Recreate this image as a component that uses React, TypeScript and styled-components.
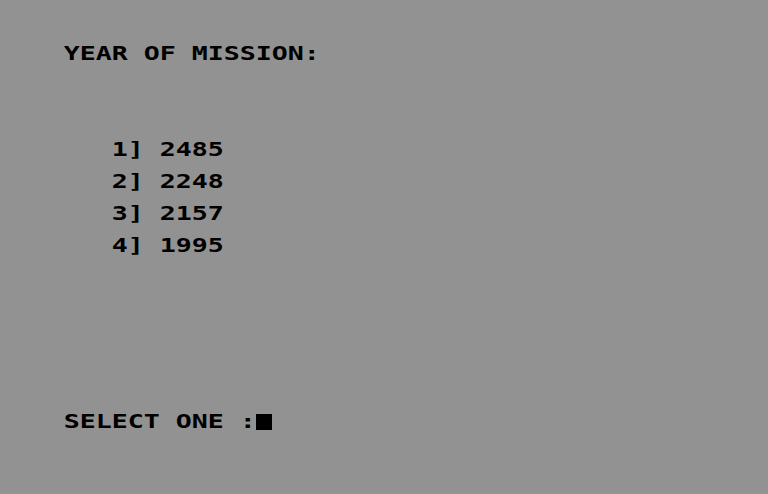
import styled, { createGlobalStyle } from "styled-components";

// 40x24 text-mode screen, each character sits in a 16x16 cell
const SCREEN_LINES = [
  "YEAR OF MISSION:",
  "",
  "",
  "",
  "",
  "",
  "   1] 2485",
  "",
  "   2] 2248",
  "",
  "   3] 2157",
  "",
  "   4] 1995",
  "",
  "",
  "",
  "",
  "",
  "",
  "",
  "",
  "",
  "",
];

const PROMPT = "SELECT ONE :";

const GlobalStyle = createGlobalStyle`
  html, body {
    margin: 0;
    padding: 0;
    background: #929292;
  }
`;

const Screen = styled.div`
  width: 768px;
  height: 494px;
  box-sizing: border-box;
  padding: 46px 64px 0 64px;
  background: #929292;
  color: #000000;
  display: flex;
  flex-direction: column;
`;

const Row = styled.div`
  display: flex;
  height: 16px;
`;

const Cell = styled.span<{ $inverse?: boolean }>`
  display: inline-flex;
  justify-content: center;
  width: 16px;
  height: 16px;
  line-height: 16px;
  background: ${(props) => (props.$inverse ? "#000000" : "transparent")};
`;

const Glyph = styled.span`
  display: inline-block;
  font-family: "DejaVu Sans Mono", "Liberation Mono", monospace;
  font-weight: 700;
  font-size: 19px;
  line-height: 16px;
  white-space: pre;
  transform: translateY(-1px) scaleX(1.4);
`;

const TextRow = ({ text, cursor }: { text: string; cursor?: boolean }) => (
  <Row>
    {text.split("").map((ch, i) => (
      <Cell key={i}>
        <Glyph>{ch}</Glyph>
      </Cell>
    ))}
    {cursor && <Cell $inverse />}
  </Row>
);

const App = () => {
  return (
    <>
      <GlobalStyle />
      <Screen>
        {SCREEN_LINES.map((line, i) => (
          <TextRow key={i} text={line} />
        ))}
        <TextRow text={PROMPT} cursor />
      </Screen>
    </>
  );
};

export default App;
